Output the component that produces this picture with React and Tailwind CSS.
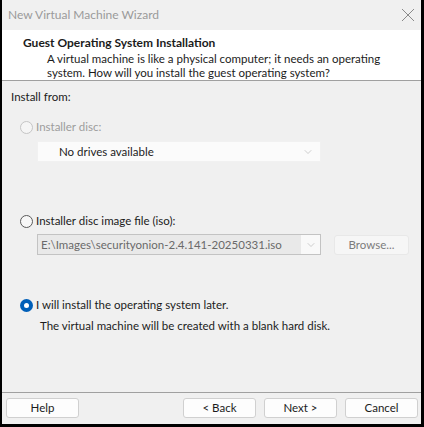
import { ChevronDown } from 'lucide-react';

const Radio = ({ checked, disabled }) => {
  if (checked) {
    return (
      <span className="w-[13px] h-[13px] rounded-full bg-[#005fb8] flex items-center justify-center shrink-0">
        <span className="w-[5px] h-[5px] rounded-full bg-white" />
      </span>
    );
  }
  return (
    <span
      className={`w-[13px] h-[13px] rounded-full border shrink-0 ${
        disabled ? 'border-[#c5c5c5] bg-[#f5f5f5]' : 'border-[#5a5a5a] bg-[#f7f7f7]'
      }`}
    />
  );
};

const Button = ({ children }) => (
  <button className="w-[73px] h-[20px] rounded-[3px] border border-[#d0d0d0] bg-[#fdfdfd] text-[11.5px] text-[#1b1b1b] leading-none">
    {children}
  </button>
);

export default function App() {
  return (
    <div className="w-[424px] h-[427px] bg-black pl-[2px] pr-[3px] pb-[3px] font-['Lato',sans-serif] text-[11.5px] leading-[16px] text-[#1b1b1b] whitespace-nowrap">
      <div className="h-full flex flex-col bg-[#f0f0f0]">
        {/* title bar */}
        <div className="h-[30px] shrink-0 flex items-center justify-between pl-[6px] pr-[5px] bg-[#f0f0f0]">
          <span className="text-[#9a9a9a] text-[12px]">New Virtual Machine Wizard</span>
          <svg width="16" height="16" viewBox="0 0 16 16" className="text-[#8a8a8a]">
            <path d="M2 2 L14 14 M14 2 L2 14" stroke="currentColor" strokeWidth="1" fill="none" />
          </svg>
        </div>

        {/* header */}
        <div className="h-[51px] shrink-0 bg-white border-b border-[#a0a0a0] pl-[21px] pt-[5px]">
          <div className="font-bold text-[12px] leading-[16px]">Guest Operating System Installation</div>
          <div className="pl-[24px] leading-[14px] mt-[1px]">
            A virtual machine is like a physical computer; it needs an operating
            <br />
            system. How will you install the guest operating system?
          </div>
        </div>

        {/* body */}
        <div className="flex-1 flex flex-col pl-[9px] pt-[8px]">
          <div>Install from:</div>

          <div className="flex items-center gap-[3px] pl-[9px] mt-[14px] text-[#9d9d9d]">
            <Radio disabled />
            <span>Installer disc:</span>
          </div>
          <div className="ml-[26px] mt-[6px] w-[284px] h-[21px] bg-[#fbfbfb] border border-[#f1f1f1] flex items-center justify-between pl-[21px] pr-[6px]">
            <span>No drives available</span>
            <ChevronDown size={12} strokeWidth={1} className="text-[#a0a0a0]" />
          </div>

          <div className="flex items-center gap-[3px] pl-[9px] mt-[51px]">
            <Radio />
            <span>Installer disc image file (iso):</span>
          </div>
          <div className="flex items-center mt-[5px] ml-[26px]">
            <div className="w-[284px] h-[21px] border border-[#c3c3c3] bg-[#f9f9f9] flex">
              <div className="flex-1 bg-[#e9e9e9] flex items-center pl-[3px] text-[#6a6a6a]">
                E:\Images\securityonion-2.4.141-20250331.iso
              </div>
              <div className="w-[19px] flex items-center justify-center">
                <ChevronDown size={12} strokeWidth={1} className="text-[#a0a0a0]" />
              </div>
            </div>
            <div className="ml-[13px] w-[75px] h-[20px] rounded-[3px] border border-[#e8e8e8] bg-[#f6f6f6] flex items-center justify-center text-[#7c7c7c]">
              Browse...
            </div>
          </div>

          <div className="flex items-center gap-[3px] pl-[9px] mt-[42px]">
            <Radio checked />
            <span>I will install the operating system later.</span>
          </div>
          <div className="pl-[29px] mt-[5px]">The virtual machine will be created with a blank hard disk.</div>
        </div>

        {/* footer */}
        <div className="h-[32px] shrink-0 border-t border-[#a0a0a0] flex items-center pl-[4px] pr-[3px] pb-[2px]">
          <Button>Help</Button>
          <div className="flex-1" />
          <div className="flex gap-[8px]">
            <Button>&lt; Back</Button>
            <Button>Next &gt;</Button>
            <Button>Cancel</Button>
          </div>
        </div>
      </div>
    </div>
  );
}
